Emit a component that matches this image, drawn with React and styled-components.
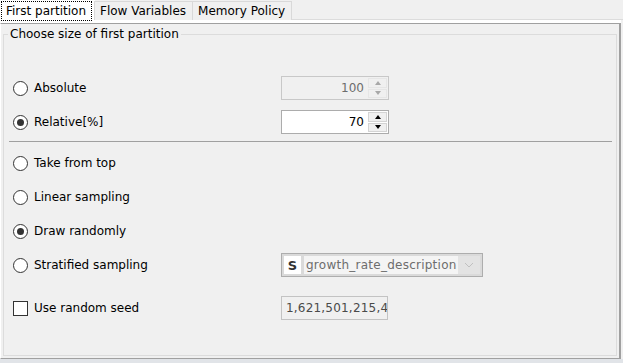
import React from 'react';
import styled, { createGlobalStyle, css } from 'styled-components';

const GlobalStyle = createGlobalStyle`
  html, body {
    margin: 0;
    padding: 0;
    background: #f0f0f0;
  }
  body {
    font-family: "DejaVu Sans", Tahoma, sans-serif;
    font-size: 12px;
    color: #000;
  }
`;

const Window = styled.div`
  box-sizing: border-box;
  width: 623px;
  height: 363px;
  display: flex;
  flex-direction: column;
  background: #f0f0f0;
  border-bottom: 4px solid #e1e4e8;
  overflow: hidden;
`;

const TabBar = styled.div`
  display: flex;
  height: 19px;
  flex-shrink: 0;
  position: relative;
  z-index: 1;
  border-bottom: 1px solid #dcdcdc;
`;

const Tab = styled.div`
  display: flex;
  align-items: center;
  box-sizing: border-box;
  height: 19px;
  margin-top: 1px;
  padding: 0 6px 0 5px;
  border: 1px solid #d9d9d9;
  border-bottom: none;
  margin-left: -1px;
  white-space: nowrap;
  background: #f0f0f0;

  ${({ active }) =>
    active &&
    css`
      height: 21px;
      margin-top: 0;
      margin-left: 0;
      padding: 0 2px 0 0;
      background: #fff;
      border-color: #fff;
    `}
`;

const FocusLabel = styled.span`
  display: flex;
  align-items: center;
  height: 18px;
  padding: 0 5px 0 4px;
  border: 1px dotted #000;
`;

const Panel = styled.div`
  flex: 1;
  display: flex;
  margin-right: 2px;
  border-top: 3px solid #fff;
`;

const Frame = styled.div`
  flex: 1;
  display: flex;
  border-top: 1px solid #a0a0a0;
  border-right: 2px solid #a0a0a0;
  border-bottom: 1px solid #a0a0a0;
  border-left: 1px solid #fff;
  padding: 2px 2px 2px 2px;
`;

const Group = styled.fieldset`
  flex: 1;
  margin: 0;
  padding: 29px 0 0 9px;
  border: 1px solid #dcdcdc;
  min-width: 0;
`;

const Legend = styled.legend`
  margin-left: -5px;
  padding: 0 2px 0 2px;
  line-height: 16px;
`;

const Row = styled.div`
  display: grid;
  grid-template-columns: 268px auto;
  align-items: center;
  height: 34px;
  margin-top: ${({ gap }) => gap || 0}px;
`;

const Option = styled.label`
  display: flex;
  align-items: center;
  gap: 6px;
  white-space: nowrap;
`;

const Radio = styled.span`
  box-sizing: border-box;
  width: 15px;
  height: 15px;
  border-radius: 50%;
  border: 1px solid #333;
  background: #fff;
  display: flex;
  align-items: center;
  justify-content: center;

  &::after {
    content: '';
    width: 7px;
    height: 7px;
    border-radius: 50%;
    background: ${({ checked }) => (checked ? '#333' : 'transparent')};
  }
`;

const Check = styled.span`
  box-sizing: border-box;
  width: 15px;
  height: 15px;
  border: 1px solid #333;
  background: #fff;
`;

const Separator = styled.div`
  height: 1px;
  margin: 2px 4px 4px -4px;
  background: #a0a0a0;
`;

const Spinner = styled.div`
  box-sizing: border-box;
  display: flex;
  width: 108px;
  height: 24px;
  border: 1px solid ${({ disabled }) => (disabled ? '#c8c8c8' : '#acacac')};
  background: ${({ disabled }) => (disabled ? '#f0f0f0' : '#fff')};
`;

const SpinValue = styled.div`
  flex: 1;
  text-align: right;
  padding-right: 3px;
  line-height: 22px;
  color: ${({ disabled }) => (disabled ? '#6d6d6d' : '#000')};
`;

const SpinButtons = styled.div`
  display: flex;
  flex-direction: column;
  width: 19px;
  margin: 1px;
  gap: 1px;
`;

const SpinButton = styled.div`
  flex: 1;
  display: flex;
  align-items: center;
  justify-content: center;
  background: #f0f0f0;
  border: 1px solid ${({ disabled }) => (disabled ? '#e6e6e6' : '#d4d4d4')};

  &::after {
    content: '';
    border-left: 3px solid transparent;
    border-right: 3px solid transparent;
    ${({ down, disabled }) => {
      const c = disabled ? '#a8a8a8' : '#000';
      return down
        ? css`border-top: 4px solid ${c};`
        : css`border-bottom: 4px solid ${c};`;
    }}
  }
`;

const Combo = styled.div`
  box-sizing: border-box;
  display: flex;
  align-items: center;
  width: 202px;
  height: 24px;
  padding: 2px;
  border: 1px solid #adadad;
  background: #dadada;
`;

const TypeBadge = styled.span`
  width: 17px;
  height: 18px;
  display: flex;
  align-items: center;
  justify-content: center;
  background: #fff;
  font-weight: bold;
  font-size: 13px;
  color: #333;
`;

const ComboText = styled.span`
  flex: 1;
  height: 18px;
  line-height: 18px;
  margin-left: 3px;
  padding-left: 2px;
  background: #f4f4f4;
  color: #6d6d6d;
  letter-spacing: 0.25px;
  white-space: nowrap;
  overflow: hidden;
`;

const ComboArrow = styled.span`
  width: 22px;
  height: 18px;
  display: flex;
  align-items: center;
  justify-content: center;
  background: #e3e3e3;
`;

const TextField = styled.div`
  box-sizing: border-box;
  width: 107px;
  height: 24px;
  padding-left: 4px;
  line-height: 22px;
  border: 1px solid #c3c3c3;
  background: #f0f0f0;
  color: #4a4a4a;
  letter-spacing: 0.2px;
  white-space: nowrap;
  overflow: hidden;
`;

function NumberSpinner({ value, disabled }) {
  return (
    <Spinner disabled={disabled}>
      <SpinValue disabled={disabled}>{value}</SpinValue>
      <SpinButtons>
        <SpinButton disabled={disabled} />
        <SpinButton disabled={disabled} down />
      </SpinButtons>
    </Spinner>
  );
}

function RadioOption({ label, checked }) {
  return (
    <Option>
      <Radio checked={checked} />
      {label}
    </Option>
  );
}

export default function App() {
  return (
    <>
      <GlobalStyle />
      <Window>
        <TabBar>
          <Tab active>
            <FocusLabel>First partition</FocusLabel>
          </Tab>
          <Tab>Flow Variables</Tab>
          <Tab>Memory Policy</Tab>
        </TabBar>
        <Panel>
          <Frame>
            <Group>
              <Legend>Choose size of first partition</Legend>
              <Row>
                <RadioOption label="Absolute" />
                <NumberSpinner value="100" disabled />
              </Row>
              <Row>
                <RadioOption label="Relative[%]" checked />
                <NumberSpinner value="70" />
              </Row>
              <Separator />
              <Row>
                <RadioOption label="Take from top" />
              </Row>
              <Row>
                <RadioOption label="Linear sampling" />
              </Row>
              <Row>
                <RadioOption label="Draw randomly" checked />
              </Row>
              <Row>
                <RadioOption label="Stratified sampling" />
                <Combo>
                  <TypeBadge>S</TypeBadge>
                  <ComboText>growth_rate_description</ComboText>
                  <ComboArrow>
                    <svg width="10" height="6" viewBox="0 0 10 6">
                      <path d="M1 1 L5 5 L9 1" fill="none" stroke="#c0c0c0" strokeWidth="1" />
                    </svg>
                  </ComboArrow>
                </Combo>
              </Row>
              <Row gap={9}>
                <Option>
                  <Check />
                  Use random seed
                </Option>
                <TextField>1,621,501,215,4</TextField>
              </Row>
            </Group>
          </Frame>
        </Panel>
      </Window>
    </>
  );
}
